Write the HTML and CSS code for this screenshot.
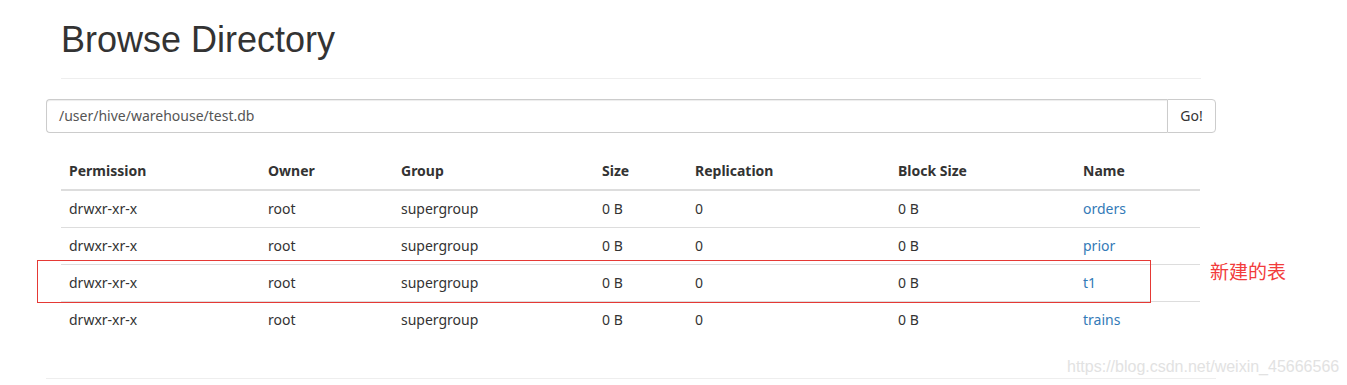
FILE: index.html
```html
<!DOCTYPE html>
<html>
<head>
<meta charset="utf-8">
<link rel="stylesheet" href="styles.css">
</head>
<body>
<div class="container">
  <div class="page-header">
    <h1>Browse Directory</h1>
  </div>
  <div class="input-group">
    <div class="form-control">/user/hive/warehouse/test.db</div>
    <button class="btn">Go!</button>
  </div>
  <div class="table-wrap">
    <table class="table">
      <colgroup>
        <col class="c1"><col class="c2"><col class="c3"><col class="c4"><col class="c5"><col class="c6"><col class="c7">
      </colgroup>
      <thead>
        <tr><th>Permission</th><th>Owner</th><th>Group</th><th>Size</th><th>Replication</th><th>Block Size</th><th>Name</th></tr>
      </thead>
      <tbody>
        <tr><td>drwxr-xr-x</td><td>root</td><td>supergroup</td><td>0 B</td><td>0</td><td>0 B</td><td><a href="#">orders</a></td></tr>
        <tr><td>drwxr-xr-x</td><td>root</td><td>supergroup</td><td>0 B</td><td>0</td><td>0 B</td><td><a href="#">prior</a></td></tr>
        <tr><td>drwxr-xr-x</td><td>root</td><td>supergroup</td><td>0 B</td><td>0</td><td>0 B</td><td><a href="#">t1</a></td></tr>
        <tr><td>drwxr-xr-x</td><td>root</td><td>supergroup</td><td>0 B</td><td>0</td><td>0 B</td><td><a href="#">trains</a></td></tr>
      </tbody>
    </table>
  </div>
  <div class="footer-line"></div>
</div>
<div class="highlight-box"></div>
<div class="annotation">新建的表</div>
<div class="watermark">https://blog.csdn.net/weixin_45666566</div>
</body>
</html>
```
FILE: styles.css
```css
html, body {
  margin: 0;
  padding: 0;
  background: #fff;
}
body {
  width: 1347px;
  height: 385px;
  overflow: hidden;
  position: relative;
  font-family: "Noto Sans", "Noto Sans CJK SC", sans-serif;
  font-size: 14px;
  color: #333;
}
.container {
  margin-left: 46px;
  width: 1170px;
}
.page-header {
  margin: 0 15px 20px;
  padding-bottom: 9px;
  border-bottom: 1px solid #eee;
}
.page-header h1 {
  margin: 20px 0 9px;
  font-family: "Liberation Sans", Arial, sans-serif;
  font-weight: 400;
  font-size: 36px;
  line-height: 1.1;
  color: #333;
}
.input-group {
  display: flex;
  height: 34px;
  margin-bottom: 20px;
}
.form-control {
  flex: 1;
  box-sizing: border-box;
  height: 34px;
  padding: 6px 12px;
  border: 1px solid #ccc;
  border-right: none;
  border-radius: 4px 0 0 4px;
  box-shadow: inset 0 1px 1px rgba(0,0,0,.075);
  line-height: 20px;
  color: #555;
}
.btn {
  box-sizing: border-box;
  width: 49px;
  height: 34px;
  padding: 6px 10px;
  border: 1px solid #ccc;
  border-radius: 0 4px 4px 0;
  background: #fff;
  color: #333;
  font-family: inherit;
  font-size: 14px;
  line-height: 20px;
}
.table-wrap {
  padding: 0 15px;
}
.table {
  width: 1139px;
  border-collapse: collapse;
  table-layout: fixed;
}
.c1 { width: 199px; }
.c2 { width: 133px; }
.c3 { width: 201px; }
.c4 { width: 93px; }
.c5 { width: 203px; }
.c6 { width: 185px; }
.c7 { width: 125px; }
.table th {
  text-align: left;
  font-weight: 700;
  padding: 8px;
  line-height: 20px;
  border-bottom: 2px solid #ddd;
}
.table td {
  padding: 8px;
  line-height: 20px;
  border-top: 1px solid #ddd;
}
.table tbody tr:first-child td {
  border-top: none;
}
.table a {
  color: #337ab7;
  text-decoration: none;
}
.footer-line {
  margin-top: 40px;
  border-top: 1px solid #eee;
}
.highlight-box {
  position: absolute;
  left: 37px;
  top: 260px;
  width: 1112px;
  height: 41px;
  border: 1px solid #e53935;
}
.annotation {
  position: absolute;
  left: 1210px;
  top: 258px;
  font-family: "Noto Sans CJK SC", sans-serif;
  font-size: 19px;
  line-height: 25px;
  color: #f23c3c;
}
.watermark {
  position: absolute;
  left: 1067px;
  top: 357px;
  font-family: "Liberation Sans", Arial, sans-serif;
  font-size: 16px;
  line-height: 20px;
  color: #e2e2e2;
}
```
